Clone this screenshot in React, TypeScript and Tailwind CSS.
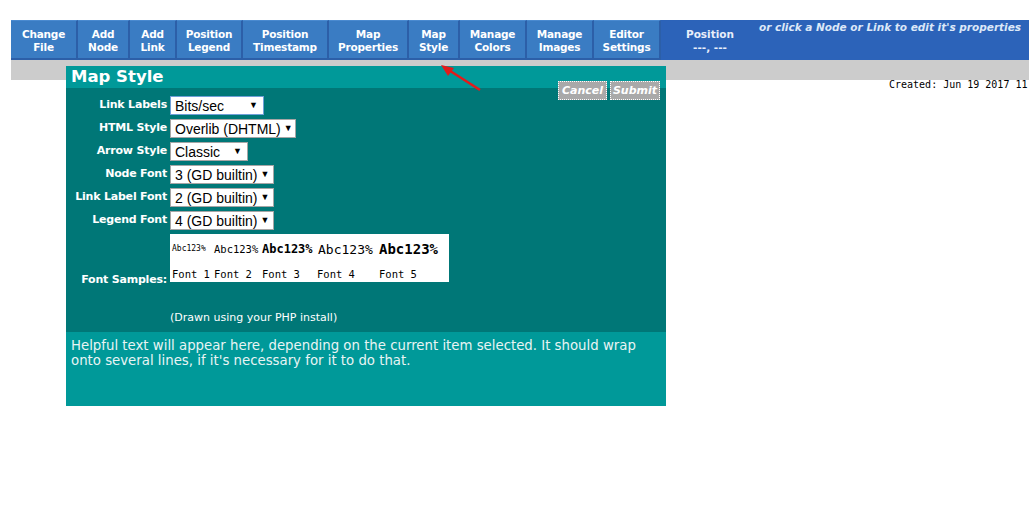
import React from "react";

const tools = [
  ["Change", "File", "w-[67px]"],
  ["Add", "Node", "w-[52px]"],
  ["Add", "Link", "w-[47px]"],
  ["Position", "Legend", "w-[66px]"],
  ["Position", "Timestamp", "w-[86px]"],
  ["Map", "Properties", "w-[80px]"],
  ["Map", "Style", "w-[51px]"],
  ["Manage", "Colors", "w-[67px]"],
  ["Manage", "Images", "w-[67px]"],
  ["Editor", "Settings", "w-[67px]"],
];

const fields = [
  ["Link Labels", "Bits/sec", "w-[94px]", true],
  ["HTML Style", "Overlib (DHTML)", "w-[126px]", false],
  ["Arrow Style", "Classic", "w-[78px]", false],
  ["Node Font", "3 (GD builtin)", "w-[104px]", false],
  ["Link Label Font", "2 (GD builtin)", "w-[104px]", false],
  ["Legend Font", "4 (GD builtin)", "w-[104px]", false],
] as const;

function FakeSelect({ value, width, focused }: { value: string; width: string; focused: boolean }) {
  return (
    <div
      className={`${width} h-[19px] bg-white border ${focused ? "border-[#6f9fd8]" : "border-[#a6a6a6]"} flex items-center justify-between pl-[4px] pr-[5px] text-[14px] text-black leading-none whitespace-nowrap overflow-hidden font-['Liberation_Sans',Arial,sans-serif]`}
    >
      <span>{value}</span>
      <span className="text-[9px] ml-[3px]">▼</span>
    </div>
  );
}

export default function App() {
  return (
    <div className="relative w-full h-[506px] bg-white overflow-hidden font-['DejaVu_Sans',Verdana,sans-serif]">
      <div className="pt-[20px] pl-[11px]">
        <div className="flex h-[40px] bg-[#2c63b9]">
          {tools.map(([a, b, w]) => (
            <div
              key={a + b}
              className={`${w} h-[40px] bg-[#3a7cc3] border-r-2 border-b-2 border-[#2c5fa8] border-t border-t-[#4a8ad0] flex flex-col items-center justify-center pt-[2px] text-white font-bold text-[10.5px] leading-[13px] tracking-[-0.2px]`}
            >
              <span>{a}</span>
              <span>{b}</span>
            </div>
          ))}
          <div className="w-[98px] flex flex-col items-center justify-center text-[#e8eefa] font-bold text-[10.5px] leading-[13px] pt-[2px]">
            <span>Position</span>
            <span>---, ---</span>
          </div>
          <div className="flex-1 pt-[1px] text-[#dce8f8] italic font-bold text-[10.5px] whitespace-nowrap leading-[13px]">
            or click a Node or Link to edit it's properties
          </div>
        </div>
        <div className="h-[20px] bg-[#cccccc]" />
        <div className="pl-[878px] whitespace-nowrap overflow-hidden font-['DejaVu_Sans_Mono',monospace] text-[10px] text-black leading-[9px]">
          Created: Jun 19 2017 11
        </div>
      </div>

      <div className="absolute left-[66px] top-[66px] w-[600px]">
        <div className="relative h-[22px] bg-[#009999] pl-[5px] text-white font-bold text-[16.5px] leading-[22px]">
          Map Style
          <div className="absolute right-[6px] top-[15px] flex gap-[3px]">
            <div className="w-[49px] h-[19px] bg-[#a9a9a9] border border-dotted border-white text-white italic font-bold text-[11px] flex items-center justify-center leading-none">
              Cancel
            </div>
            <div className="w-[50px] h-[19px] bg-[#a9a9a9] border border-dotted border-white text-white italic font-bold text-[11px] flex items-center justify-center leading-none">
              Submit
            </div>
          </div>
        </div>
        <div className="bg-[#007777] h-[244px] pt-[8px]">
          <div className="grid grid-cols-[101px_auto] gap-x-[3px] gap-y-[4px] items-center">
            {fields.map(([label, value, w, f]) => (
              <React.Fragment key={label}>
                <div className="text-right text-white font-bold text-[11px] whitespace-nowrap tracking-[-0.2px]">{label}</div>
                <FakeSelect value={value} width={w} focused={f} />
              </React.Fragment>
            ))}
            <div className="text-right text-white font-bold text-[11px] whitespace-nowrap tracking-[-0.2px] self-center pt-[1px]">
              Font Samples:
            </div>
            <div>
              <div className="w-[279px] h-[48px] bg-white text-black font-['DejaVu_Sans_Mono',monospace] pl-[2px]">
                <div className="flex items-center h-[30px] leading-none">
                  <span className="w-[42px] text-[8px]">Abc123%</span>
                  <span className="w-[48px] text-[10.5px]">Abc123%</span>
                  <span className="w-[56px] text-[12px] font-bold">Abc123%</span>
                  <span className="w-[61px] text-[13px]">Abc123%</span>
                  <span className="text-[14px] font-bold">Abc123%</span>
                </div>
                <div className="flex items-center h-[18px] pt-[2px] text-[10.5px] leading-none">
                  <span className="w-[42px]">Font 1</span>
                  <span className="w-[48px]">Font 2</span>
                  <span className="w-[55px]">Font 3</span>
                  <span className="w-[62px]">Font 4</span>
                  <span>Font 5</span>
                </div>
              </div>
              <div className="h-[29px]" />
              <div className="text-white text-[11px] leading-[14px]">(Drawn using your PHP install)</div>
            </div>
          </div>
        </div>
        <div className="bg-[#009999] h-[74px] pl-[5px] pr-[16px] pt-[6px] text-[#e8f4f4] text-[13.3px] leading-[15px]">
          Helpful text will appear here, depending on the current item selected. It should wrap onto several lines, if it's necessary for it to do that.
        </div>
      </div>

      <svg className="absolute left-[436px] top-[60px]" width="50" height="36" viewBox="0 0 50 36">
        <line x1="8" y1="7" x2="44" y2="30" stroke="#e21b1b" strokeWidth="2.5" />
        <polygon points="5,5 18,8 12,16" fill="#e21b1b" />
      </svg>
    </div>
  );
}
